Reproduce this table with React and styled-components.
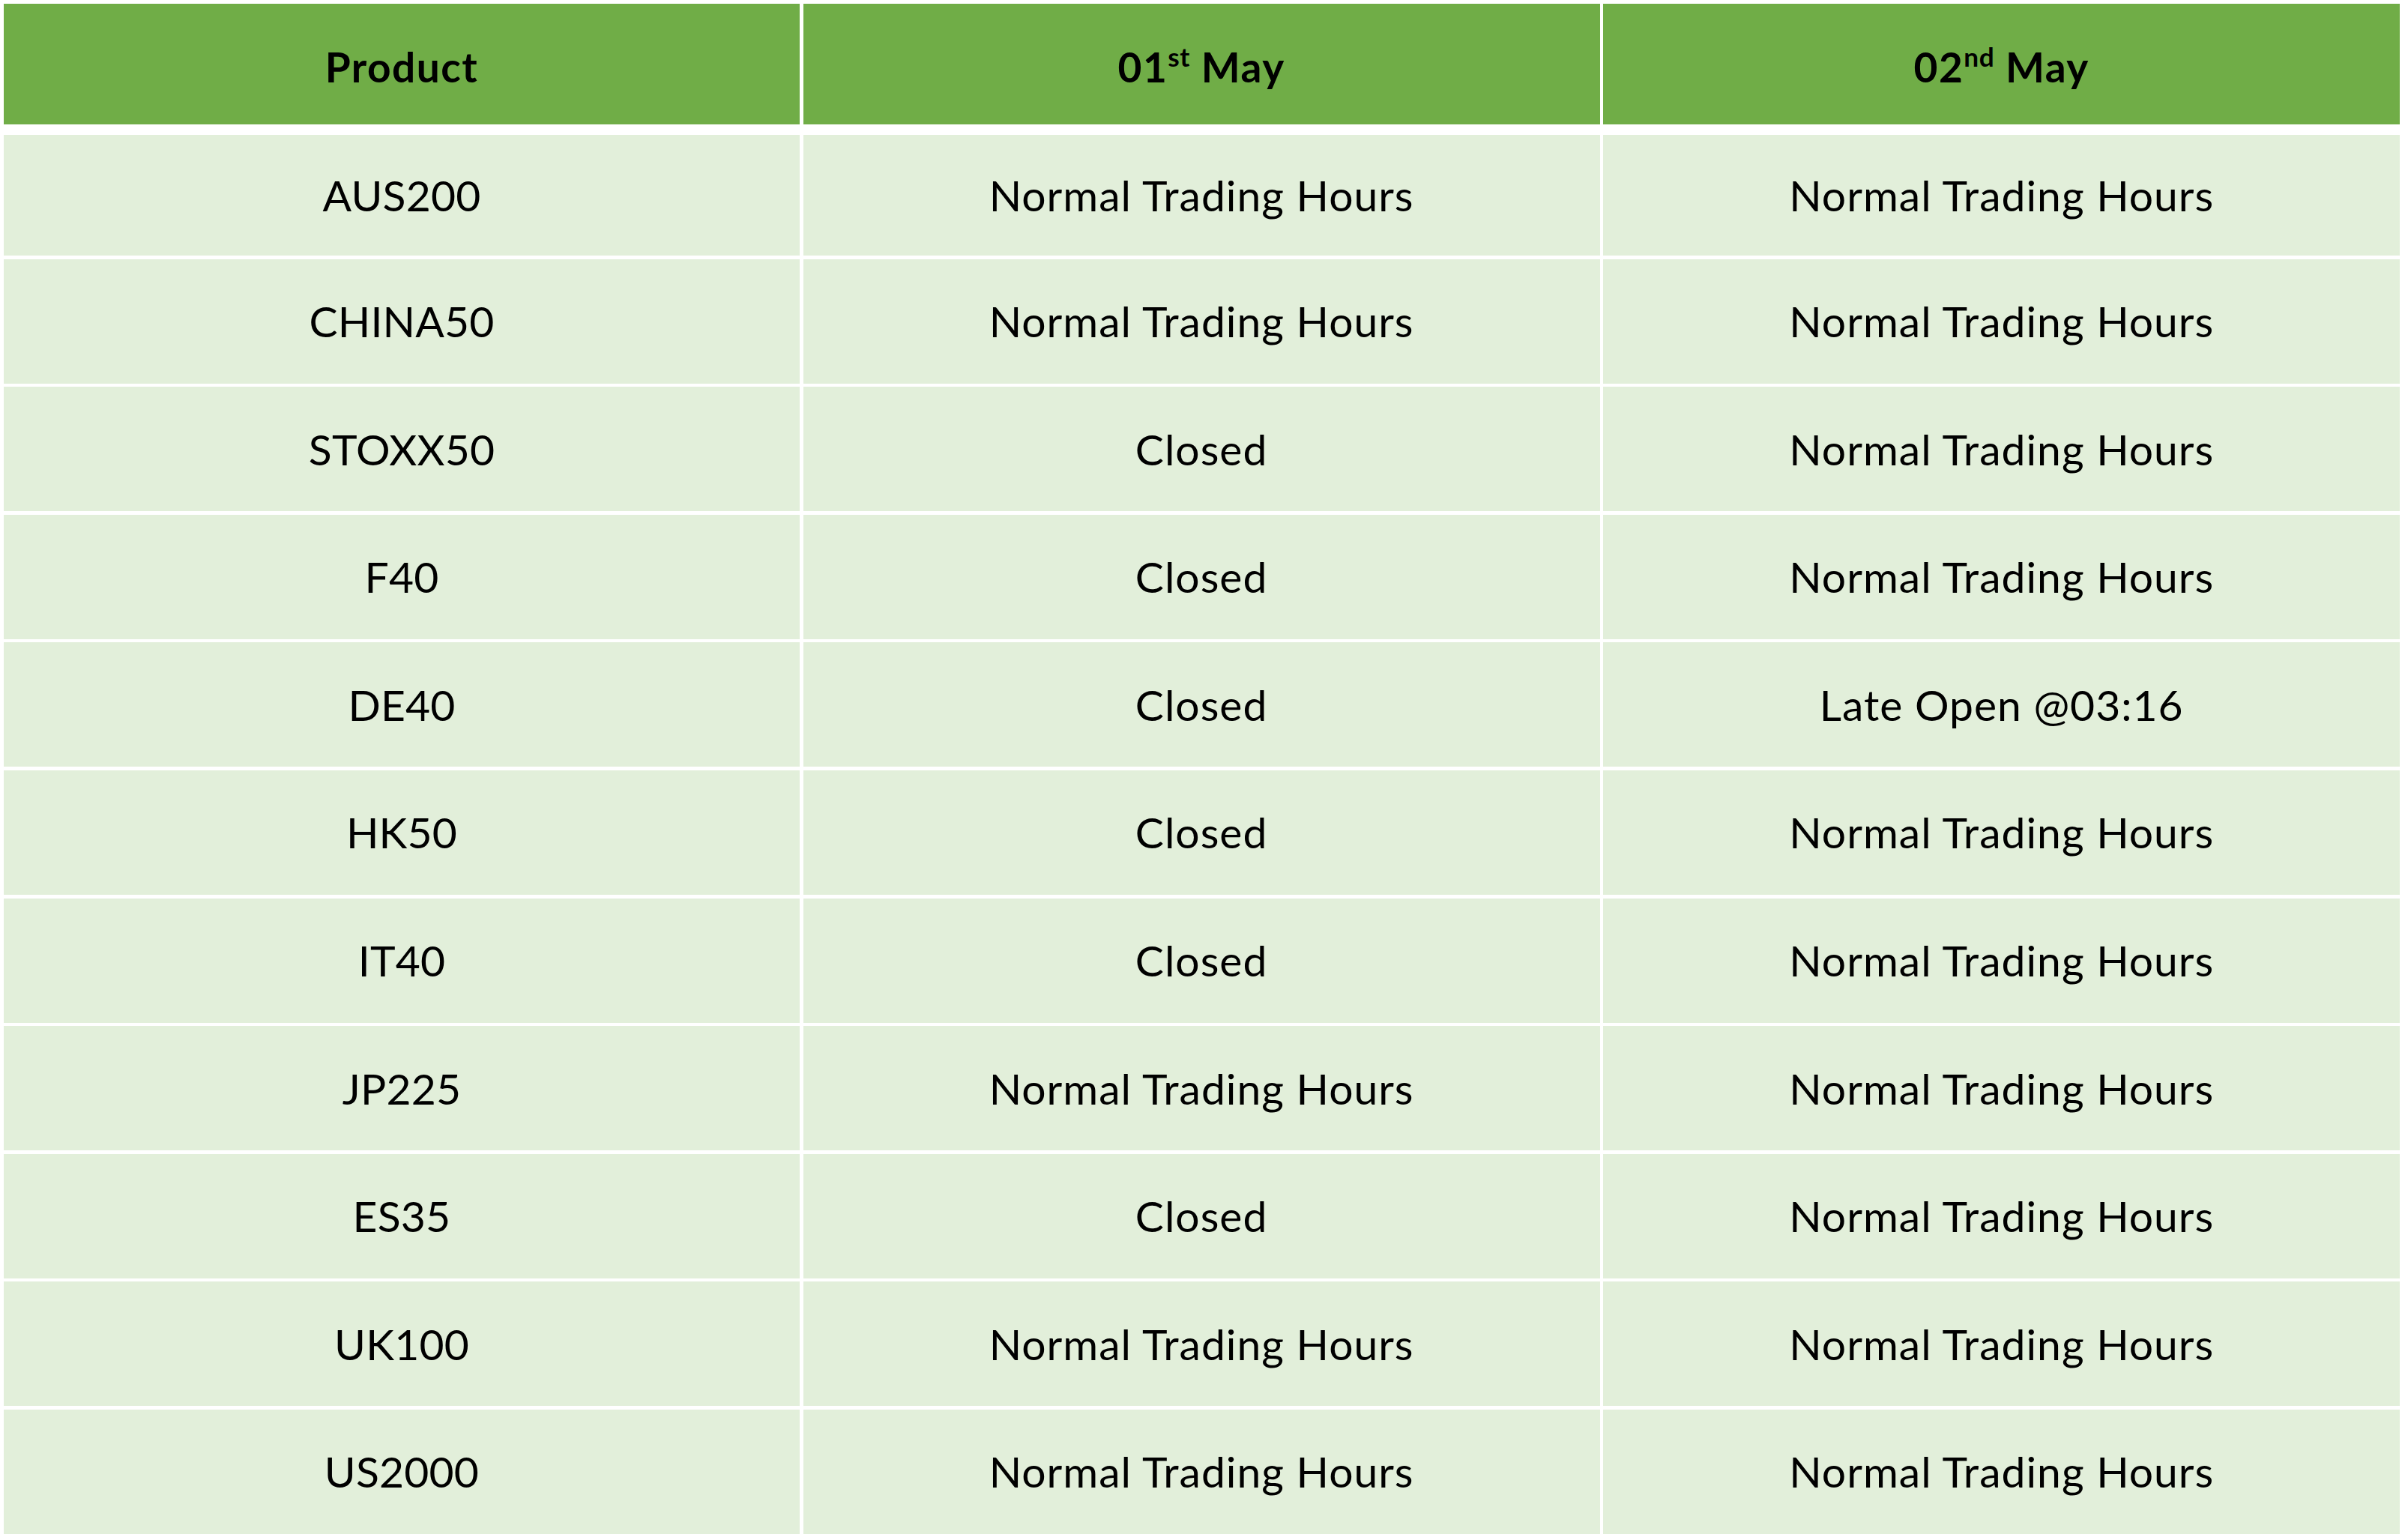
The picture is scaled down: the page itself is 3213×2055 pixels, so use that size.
import React from "react";
import styled, { createGlobalStyle } from "styled-components";

const GlobalStyle = createGlobalStyle`
  html, body {
    margin: 0;
    padding: 0;
    background: #ffffff;
  }
  body {
    font-family: "Lato", "Open Sans", sans-serif;
    color: #000000;
  }
`;

const rows = [
  ["AUS200", "Normal Trading Hours", "Normal Trading Hours"],
  ["CHINA50", "Normal Trading Hours", "Normal Trading Hours"],
  ["STOXX50", "Closed", "Normal Trading Hours"],
  ["F40", "Closed", "Normal Trading Hours"],
  ["DE40", "Closed", "Late Open @03:16"],
  ["HK50", "Closed", "Normal Trading Hours"],
  ["IT40", "Closed", "Normal Trading Hours"],
  ["JP225", "Normal Trading Hours", "Normal Trading Hours"],
  ["ES35", "Closed", "Normal Trading Hours"],
  ["UK100", "Normal Trading Hours", "Normal Trading Hours"],
  ["US2000", "Normal Trading Hours", "Normal Trading Hours"],
];

const Page = styled.div`
  padding: 5px 11px 8px 5px;
  width: 3213px;
  box-sizing: border-box;
`;

const Table = styled.div`
  display: grid;
  grid-template-columns: 1062px 1063px 1063px;
  column-gap: 4.6px;
  row-gap: 4.6px;
`;

const HeadCell = styled.div`
  background: #70ad47;
  height: 161px;
  box-sizing: border-box;
  padding-top: 8px;
  margin-bottom: 9.4px;
  display: flex;
  align-items: center;
  justify-content: center;
  font-weight: 700;
  font-size: 55px;
  letter-spacing: 1.5px;
`;

const Cell = styled.div`
  background: #e2efda;
  height: ${({ $first }) => ($first ? "161px" : "166px")};
  display: flex;
  align-items: center;
  justify-content: center;
  font-size: 57px;
  letter-spacing: ${({ $narrow }) => ($narrow ? "0.2px" : "1px")};
`;

const Label = styled.span`
  white-space: nowrap;
  line-height: 1;
  sup {
    font-size: 0.64em;
    vertical-align: 0.6em;
    line-height: 0;
    letter-spacing: 0.5px;
  }
`;

export default function App() {
  return (
    <Page>
      <GlobalStyle />
      <Table>
        <HeadCell>
          <Label>Product</Label>
        </HeadCell>
        <HeadCell>
          <Label>
            01<sup>st</sup> May
          </Label>
        </HeadCell>
        <HeadCell>
          <Label>
            02<sup>nd</sup> May
          </Label>
        </HeadCell>
        {rows.map((row, i) =>
          row.map((text, j) => (
            <Cell key={`${i}-${j}`} $first={i === 0} $narrow={j === 0}>
              <Label>{text}</Label>
            </Cell>
          ))
        )}
      </Table>
    </Page>
  );
}
